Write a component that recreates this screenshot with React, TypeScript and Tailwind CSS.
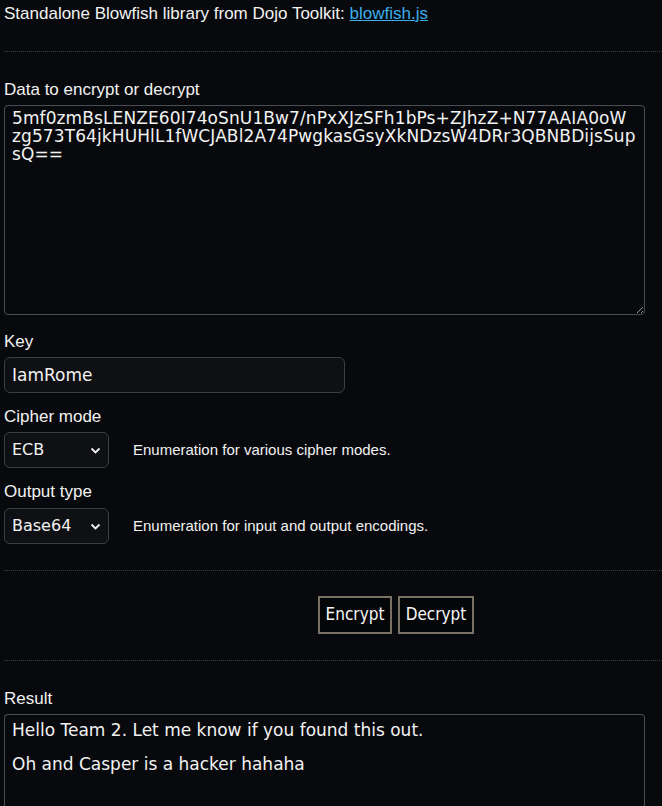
import React from 'react';

const label = 'text-[17px] leading-[18px] text-[#f2f2f2]';
const hr = 'border-0 border-t border-dotted border-[#3a3d40]';

const cipherText =
  '5mf0zmBsLENZE60I74oSnU1Bw7/nPxXJzSFh1bPs+ZJhzZ+N77AAIA0oW\nzg573T64jkHUHlL1fWCJABl2A74PwgkasGsyXkNDzsW4DRr3QBNBDijsSup\nsQ==';

function Select({ value, options }: { value: string; options: string[] }) {
  return (
    <div className="relative w-[105px]">
      <select
        defaultValue={value}
        className="h-[36px] w-full appearance-none rounded-[6px] border border-[#3b3e43] bg-[#0e1014] pl-[7px] font-['DejaVu_Sans',sans-serif] text-[16px] text-[#f2f2f2] outline-none"
      >
        {options.map((o) => (
          <option key={o}>{o}</option>
        ))}
      </select>
      <svg
        className="pointer-events-none absolute right-[8px] top-[15px]"
        width="11"
        height="7"
        viewBox="0 0 11 7"
        fill="none"
      >
        <path d="M1.5 1.5 5.5 5.5 9.5 1.5" stroke="#f2f2f2" strokeWidth="1.8" />
      </svg>
    </div>
  );
}

function App() {
  return (
    <div className="min-h-[806px] bg-[#07090c] pl-[4px] font-['Liberation_Sans',Arial,sans-serif] text-[#f2f2f2]">
      <div className="pt-[5px] text-[17px] leading-[18px]">
        Standalone Blowfish library from Dojo Toolkit:{' '}
        <a href="#" className="text-[#3aaee8] underline">
          blowfish.js
        </a>
      </div>

      <hr className={`mt-[28px] ${hr}`} />

      <div className={`mt-[29px] ${label}`}>Data to encrypt or decrypt</div>
      <textarea
        defaultValue={cipherText}
        className="mt-[6px] block h-[210px] w-[641px] rounded-[4px] border border-[#4a4d52] bg-[#07090c] px-[7px] py-[3px] font-['DejaVu_Sans',sans-serif] text-[17px] leading-[18px] tracking-[0.1px] text-[#f2f2f2] outline-none"
      />

      <div className={`mt-[18px] ${label}`}>Key</div>
      <input
        defaultValue="IamRome"
        className="mt-[6px] block h-[36px] w-[341px] rounded-[6px] border border-[#3b3e43] bg-[#0e1014] px-[7px] font-['DejaVu_Sans',sans-serif] text-[17px] text-[#f2f2f2] outline-none"
      />

      <div className={`mt-[15px] ${label}`}>Cipher mode</div>
      <div className="mt-[6px] flex items-center gap-[24px]">
        <Select value="ECB" options={['ECB', 'CBC', 'PCBC', 'CFB', 'OFB', 'CTR']} />
        <span className="text-[15px]">Enumeration for various cipher modes.</span>
      </div>

      <div className={`mt-[15px] ${label}`}>Output type</div>
      <div className="mt-[7px] flex items-center gap-[24px]">
        <Select value="Base64" options={['Base64', 'Hex', 'String', 'Raw']} />
        <span className="text-[15px]">Enumeration for input and output encodings.</span>
      </div>

      <hr className={`mt-[26px] ${hr}`} />

      <div className="mt-[25px] flex gap-[6px] pl-[314px]">
        <button className="h-[38px] w-[74px] border-2 border-[#7b7064] bg-[#050608] font-['DejaVu_Sans_Condensed',sans-serif] text-[17px] text-[#f8f8f8]">
          Encrypt
        </button>
        <button className="h-[38px] w-[76px] border-2 border-[#7b7064] bg-[#050608] font-['DejaVu_Sans_Condensed',sans-serif] text-[17px] text-[#f8f8f8]">
          Decrypt
        </button>
      </div>

      <hr className={`mt-[26px] ${hr}`} />

      <div className={`mt-[29px] ${label}`}>Result</div>
      <div className="mt-[6px] h-[120px] w-[641px] rounded-t-[4px] border border-b-0 border-[#4a4d52] bg-[#07090c] px-[7px] pt-[5px] font-['DejaVu_Sans',sans-serif] text-[17px] leading-[20px]">
        <p>Hello Team 2. Let me know if you found this out.</p>
        <p className="mt-[14px]">Oh and Casper is a hacker hahaha</p>
      </div>
    </div>
  );
}

export default App;
